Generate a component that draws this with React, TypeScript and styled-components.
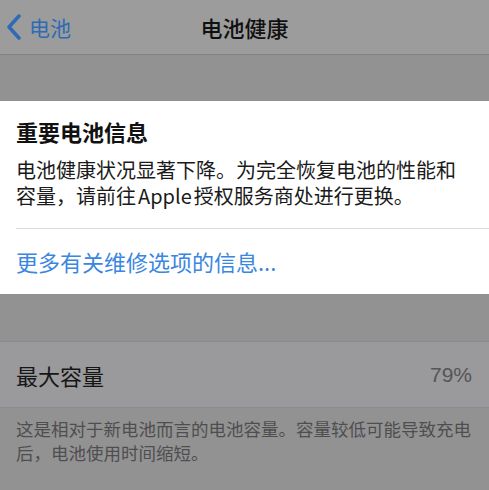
import React from "react";
import styled, { createGlobalStyle } from "styled-components";

const GlobalStyle = createGlobalStyle`
  html, body {
    margin: 0;
    padding: 0;
    background: #929292;
  }
  body {
    font-family: "Noto Sans CJK SC", "Noto Sans", sans-serif;
  }
`;

const Page = styled.div`
  width: 489px;
  height: 490px;
  overflow: hidden;
  background: #929292;
  display: flex;
  flex-direction: column;
`;

const NavBar = styled.div`
  position: relative;
  height: 54px;
  flex: 0 0 auto;
  background: #9c9c9c;
  border-bottom: 1px solid #828282;
  display: flex;
  align-items: center;
  justify-content: center;
`;

const BackButton = styled.div`
  position: absolute;
  left: 6px;
  top: 0;
  bottom: 0;
  display: flex;
  align-items: center;
  gap: 7px;
  color: #2d6bb5;
  font-size: 21px;
`;

const NavTitle = styled.div`
  font-size: 22px;
  font-weight: 500;
  color: #111;
`;

const Spacer = styled.div<{ h: number }>`
  height: ${({ h }) => h}px;
  flex: 0 0 auto;
`;

const Card = styled.div`
  background: #fff;
  padding: 14px 0 0 16px;
  height: 193px;
  box-sizing: border-box;
  display: flex;
  flex-direction: column;
`;

const CardTitle = styled.div`
  font-size: 22px;
  font-weight: 600;
  color: #111;
  line-height: 32px;
`;

const CardBody = styled.div`
  margin-top: 10px;
  font-size: 20px;
  line-height: 26px;
  color: #1a1a1a;
  padding-right: 20px;
  padding-bottom: 19px;
  border-bottom: 1px solid #dcdcdc;
`;

const Brand = styled.span`
  margin: 0 2px;
`;

const CardLink = styled.div`
  margin-top: 17px;
  font-size: 22px;
  line-height: 30px;
  color: #3a86e0;
`;

const Row = styled.div`
  height: 65px;
  flex: 0 0 auto;
  background: #9a999b;
  border-top: 1px solid #8a898b;
  border-bottom: 1px solid #8a898b;
  display: flex;
  align-items: center;
  justify-content: space-between;
  padding: 0 17px 0 16px;
`;

const RowLabel = styled.div`
  font-size: 22px;
  color: #161616;
`;

const RowValue = styled.div`
  font-family: "Liberation Sans", "Noto Sans", sans-serif;
  font-size: 21px;
  color: #555;
`;

const Footer = styled.div`
  padding: 9px 16px 0 16px;
  font-size: 17.5px;
  line-height: 24px;
  color: #4e4e50;
`;

const App: React.FC = () => {
  return (
    <>
      <GlobalStyle />
      <Page>
        <NavBar>
          <BackButton>
            <svg width="16" height="26" viewBox="0 0 16 26">
              <path
                d="M13 2 L3 13 L13 24"
                fill="none"
                stroke="#2d6bb5"
                strokeWidth="3.5"
                strokeLinecap="round"
                strokeLinejoin="round"
              />
            </svg>
            <span>电池</span>
          </BackButton>
          <NavTitle>电池健康</NavTitle>
        </NavBar>
        <Spacer h={46} />
        <Card>
          <CardTitle>重要电池信息</CardTitle>
          <CardBody>
            电池健康状况显著下降。为完全恢复电池的性能和容量，请前往<Brand>Apple</Brand>授权服务商处进行更换。
          </CardBody>
          <CardLink>更多有关维修选项的信息...</CardLink>
        </Card>
        <Spacer h={47} />
        <Row>
          <RowLabel>最大容量</RowLabel>
          <RowValue>79%</RowValue>
        </Row>
        <Footer>
          这是相对于新电池而言的电池容量。容量较低可能导致充电后，电池使用时间缩短。
        </Footer>
      </Page>
    </>
  );
};

export default App;
